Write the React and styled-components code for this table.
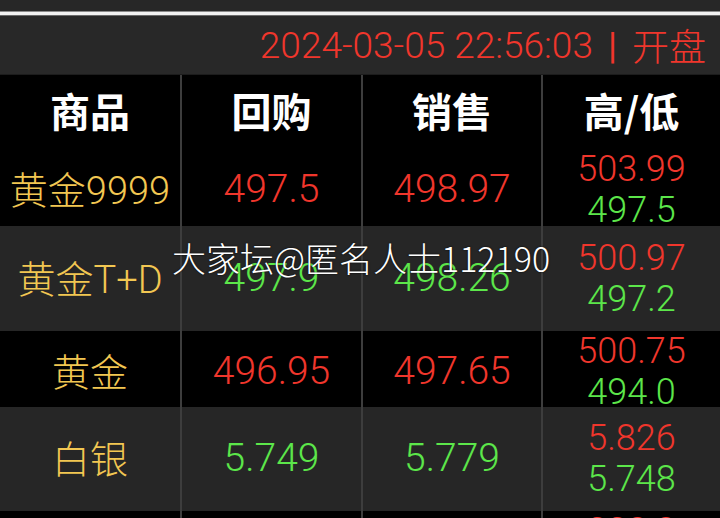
import React from 'react';
import styled, { createGlobalStyle } from 'styled-components';

const RED = '#f0362c';
const GREEN = '#5ce64a';
const GOLD = '#f2c752';

const quotes = [
    { name: '黄金9999', buy: ['497.5', 'up'], sell: ['498.97', 'up'], high: '503.99', low: '497.5', bg: '#000', h: 77 },
    { name: '黄金T+D', buy: ['497.9', 'down'], sell: ['498.26', 'down'], high: '500.97', low: '497.2', bg: '#262626', h: 105 },
    { name: '黄金', buy: ['496.95', 'up'], sell: ['497.65', 'up'], high: '500.75', low: '494.0', bg: '#000', h: 76 },
    { name: '白银', buy: ['5.749', 'down'], sell: ['5.779', 'down'], high: '5.826', low: '5.748', bg: '#262626', h: 104 },
    { name: '铂金', buy: ['226.1', 'up'], sell: ['228.3', 'up'], high: '228.8', low: '225.0', bg: '#000', h: 70 },
];

function App() {
    return (
        <>
            <GlobalStyle />
            <Page>
                <TopBar />
                <Rule />
                <StatusBar>2024-03-05 22:56:03 <Sep>|</Sep> 开盘</StatusBar>

                <Row $bg="#000" $h={74}>
                    <HeadCell>商品</HeadCell>
                    <HeadCell>回购</HeadCell>
                    <HeadCell>销售</HeadCell>
                    <HeadCell>高/低</HeadCell>
                </Row>

                {quotes.map((q) => (
                    <Row key={q.name} $bg={q.bg} $h={q.h}>
                        <Cell>
                            <Name>{q.name}</Name>
                        </Cell>
                        <Cell>
                            <Price $trend={q.buy[1]}>{q.buy[0]}</Price>
                        </Cell>
                        <Cell>
                            <Price $trend={q.sell[1]}>{q.sell[0]}</Price>
                        </Cell>
                        <Cell>
                            <Range $trend="up">{q.high}</Range>
                            <Range $trend="down">{q.low}</Range>
                        </Cell>
                    </Row>
                ))}

                <Watermark>大家坛@匿名人士112190</Watermark>
            </Page>
        </>
    );
}

export default App;

const GlobalStyle = createGlobalStyle`
body {
    margin: 0;
    background: #000;
    font-family: Roboto, "Noto Sans CJK SC", sans-serif;
}
`

const Page = styled.div`
width: 720px;
height: 518px;
overflow: hidden;
position: relative;
background: #000;
`

const TopBar = styled.div`
height: 11px;
background: #272727;
`

const Rule = styled.div`
height: 3px;
background: #f2f2f2;
border-top: 1px solid #8a8a8a;
border-bottom: 1px solid #6a6a6a;
`

const StatusBar = styled.div`
height: 58px;
background: #282828;
border-bottom: 1px solid #1c1c1c;
display: flex;
align-items: center;
justify-content: flex-end;
padding-right: 14px;
color: ${RED};
font-size: 37px;
font-weight: 300;
white-space: pre;
`

const Sep = styled.span`
margin: 0 6px;
font-weight: 400;
`

const Row = styled.div`
display: grid;
grid-template-columns: 180px 181px 180px 1fr;
height: ${(p) => p.$h}px;
background: ${(p) => p.$bg};
`

const Cell = styled.div`
display: flex;
flex-direction: column;
align-items: center;
justify-content: center;
white-space: nowrap;
& + & {
    border-left: 2px solid #3d3d3d;
}
`

const HeadCell = styled(Cell)`
color: #fff;
font-size: 40px;
font-weight: 700;
font-family: "Noto Sans CJK SC", sans-serif;
padding-bottom: 4px;
`

const Name = styled.span`
color: ${GOLD};
font-size: 38px;
font-weight: 300;
margin-bottom: 5px;
`

const Price = styled.span`
color: ${(p) => (p.$trend === 'up' ? RED : GREEN)};
font-size: 39px;
font-weight: 300;
margin-bottom: 2px;
`

const Range = styled.span`
color: ${(p) => (p.$trend === 'up' ? RED : GREEN)};
font-size: 36px;
font-weight: 300;
line-height: 41px;
`

const Watermark = styled.div`
position: absolute;
left: 172px;
top: 233px;
color: #fff;
font-size: 34px;
font-family: "Noto Sans CJK SC", sans-serif;
font-weight: 300;
text-shadow: 0 0 2px rgba(0, 0, 0, 0.9);
white-space: nowrap;
`
